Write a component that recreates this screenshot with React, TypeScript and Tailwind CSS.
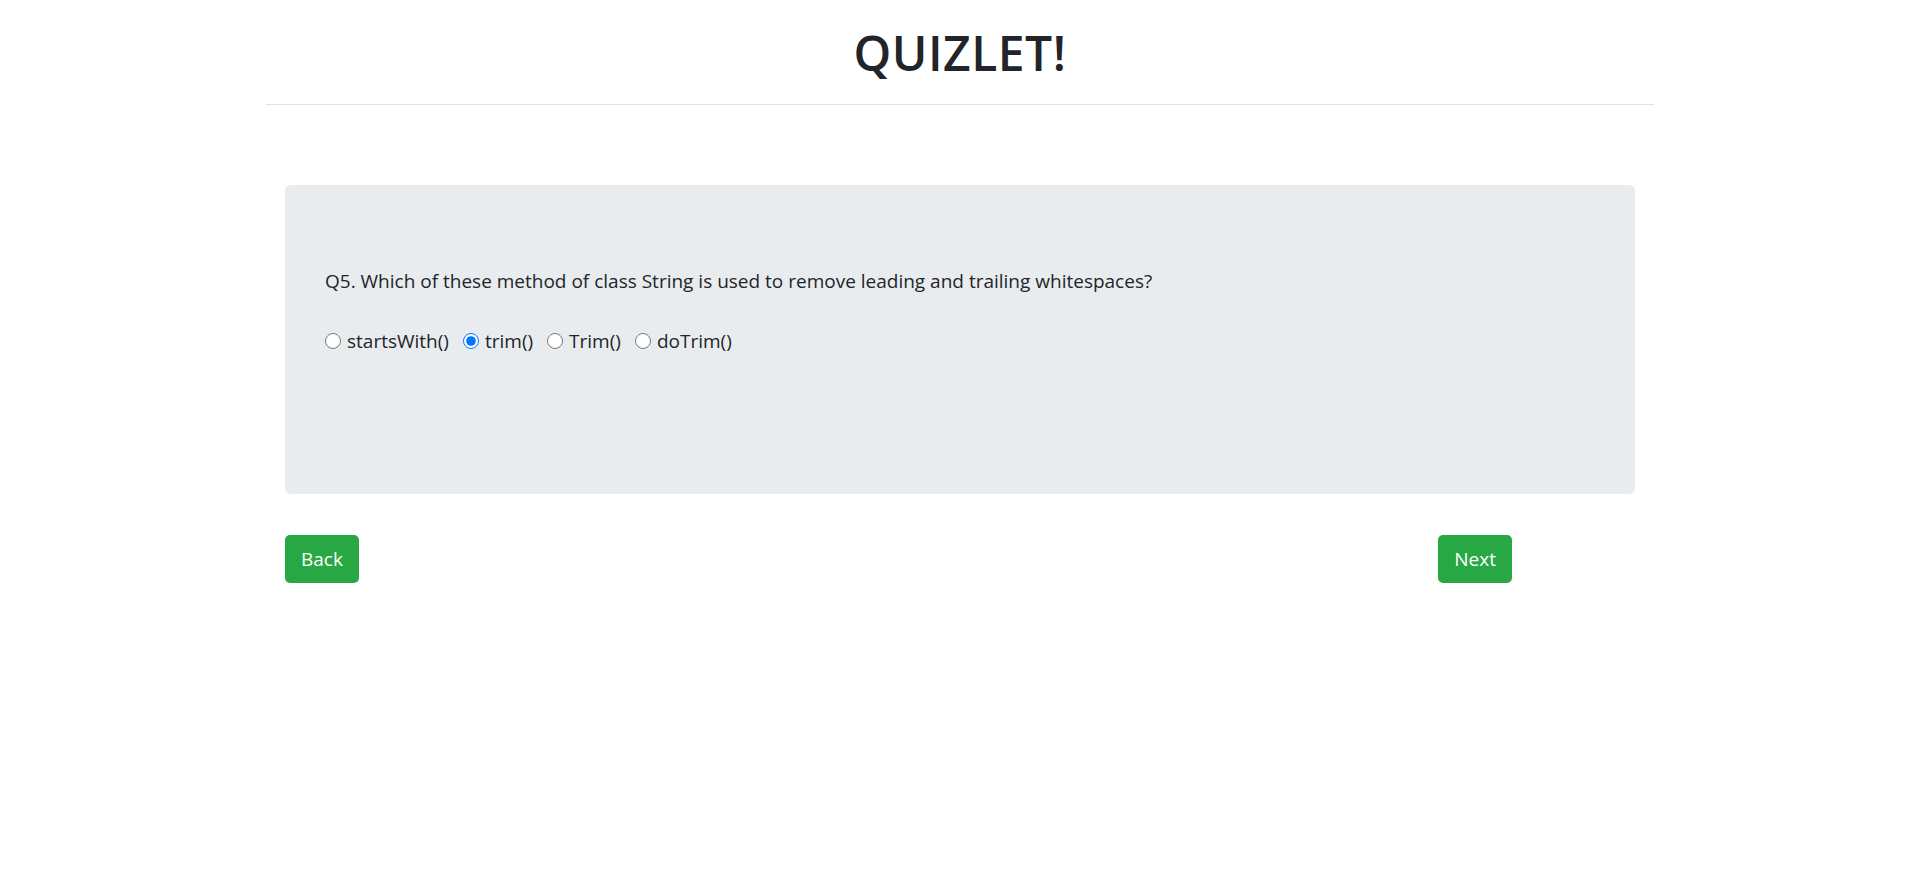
import { useState } from "react";

const options = ["startsWith()", "trim()", "Trim()", "doTrim()"];

export default function App() {
    const [answer, setAnswer] = useState("trim()");

    return (
        <div className="min-h-[896px] bg-white text-[#212529] font-['Open_Sans',sans-serif]">
            <div className="w-[1388px] mx-auto">
                <h1 className="text-center text-[48px] font-semibold leading-[60px] pt-[23px] pb-[21px] tracking-[0.5px]">
                    QUIZLET!
                </h1>
                <hr className="border-0 border-t border-[#e2e2e2]" />

                <div className="mx-[19px] mt-[80px] bg-[#e9ecef] rounded-[6px] h-[309px] px-[40px] pt-[81px]">
                    <p className="text-[19px] leading-[30px]">
                        Q5. Which of these method of class String is used to remove leading and trailing whitespaces?
                    </p>
                    <div className="flex items-center mt-[30px] text-[19px] leading-[30px]">
                        {options.map(opt => (
                            <label key={opt} className="flex items-center mr-[14px] cursor-pointer">
                                <input
                                    type="radio"
                                    name="q5"
                                    checked={answer === opt}
                                    onChange={() => setAnswer(opt)}
                                    className="w-4 h-4 m-0 mr-[6px] accent-[#0075ff]"
                                />
                                <span>{opt}</span>
                            </label>
                        ))}
                    </div>
                </div>

                <div className="flex justify-between mx-[19px] mt-[41px] pr-[123px]">
                    <button className="h-[48px] px-[16px] bg-[#28a745] text-white text-[19px] rounded-[5px]">
                        Back
                    </button>
                    <button className="h-[48px] px-[16px] bg-[#28a745] text-white text-[19px] rounded-[5px]">
                        Next
                    </button>
                </div>
            </div>
        </div>
    );
}
